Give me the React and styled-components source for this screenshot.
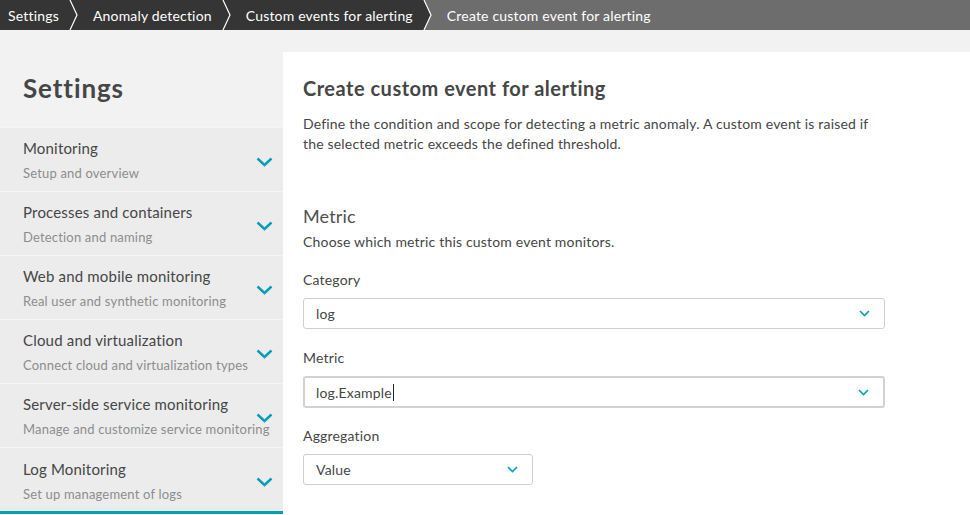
import React from "react";
import styled, { createGlobalStyle } from "styled-components";

const GlobalStyle = createGlobalStyle`
  html, body {
    margin: 0;
    padding: 0;
    background: #f2f2f2;
    font-family: Lato, "Open Sans", "Liberation Sans", sans-serif;
    color: #454646;
    letter-spacing: 0.18px;
  }
  * { box-sizing: border-box; }
`;

const TEAL = "#00a1b2";

const Page = styled.div`
  width: 970px;
  height: 515px;
  overflow: hidden;
  display: flex;
  flex-direction: column;
  background: #f2f2f2;
`;

const Breadcrumbs = styled.nav`
  height: 30px;
  display: flex;
  align-items: stretch;
  background: #353535;
  flex-shrink: 0;
`;

const Crumb = styled.div`
  display: flex;
  align-items: center;
  padding: 0 10px 0 ${(p) => (p.$first ? "8px" : "15px")};
  color: #fff;
  font-size: 14px;
  white-space: nowrap;
  background: ${(p) => (p.$current ? "#6d6d6d" : "transparent")};
  flex: ${(p) => (p.$current ? 1 : "none")};
`;

const SepSvg = styled.svg`
  display: block;
  width: 9px;
  height: 30px;
  flex-shrink: 0;
`;

function Separator({ toCurrent }) {
  return (
    <SepSvg viewBox="0 0 9 30">
      {toCurrent && <polygon points="1,0 9,0 9,30 1,30 8,15" fill="#6d6d6d" />}
      <polyline points="1,0 8,15 1,30" fill="none" stroke="#fff" strokeWidth="1.2" />
    </SepSvg>
  );
}

const Body = styled.div`
  flex: 1;
  display: flex;
  min-height: 0;
`;

const Sidebar = styled.aside`
  width: 283px;
  flex-shrink: 0;
  display: flex;
  flex-direction: column;
`;

const SideTitle = styled.h1`
  margin: 0;
  padding: 43px 23px 24px;
  font-size: 26px;
  line-height: 30px;
  font-weight: 700;
  color: #454646;
  letter-spacing: 0.9px;
`;

const NavItem = styled.div`
  height: ${(p) => (p.$active ? "67px" : "64px")};
  display: grid;
  grid-template-columns: minmax(0, 1fr) 17px;
  align-items: center;
  padding: 0 10px 0 23px;
  background: #ececec;
  border-top: 1px solid #f5f5f5;
  border-bottom: ${(p) => (p.$active ? `3px solid ${TEAL}` : "none")};
`;

const NavText = styled.div`
  display: flex;
  flex-direction: column;
  gap: 6px;
  padding-top: ${(p) => (p.$active ? "3px" : "0")};
`;

const NavTitle = styled.div`
  font-size: 15px;
  line-height: 20px;
  color: #454646;
  white-space: nowrap;
`;

const NavSub = styled.div`
  font-size: 13px;
  line-height: 18px;
  color: #8c8c8c;
  white-space: nowrap;
`;

const NavChevron = styled.svg`
  width: 17px;
  height: 10px;
  margin-top: 4px;
`;

const Main = styled.main`
  flex: 1;
  margin-top: 22px;
  background: #fff;
  padding: 24px 85px 0 20px;
`;

const Heading = styled.h2`
  margin: 0;
  font-size: 20px;
  line-height: 24px;
  font-weight: 700;
  color: #454646;
  letter-spacing: 0.5px;
`;

const Description = styled.p`
  margin: 14px 0 0;
  font-size: 14px;
  line-height: 20px;
  color: #454646;
  max-width: 586px;
`;

const SectionTitle = styled.h3`
  margin: 51px 0 0;
  font-size: 18px;
  line-height: 22px;
  font-weight: 400;
  color: #505050;
`;

const SectionSub = styled.div`
  margin-top: 6px;
  font-size: 14px;
  line-height: 18px;
  color: #454646;
`;

const Label = styled.div`
  margin-top: ${(p) => p.$mt || "20px"};
  font-size: 14px;
  line-height: 18px;
  color: #454646;
`;

const Select = styled.div`
  margin-top: 9px;
  width: ${(p) => p.$width || "582px"};
  height: ${(p) => (p.$focused ? "32px" : "31px")};
  display: flex;
  align-items: center;
  justify-content: space-between;
  padding: 0 14px 0 ${(p) => (p.$focused ? "11px" : "12px")};
  border: ${(p) => (p.$focused ? "2px solid #d2d2d2" : "1px solid #cfcfcf")};
  border-radius: 3px;
  background: #fff;
  font-size: 14px;
  color: #454646;
`;

const Value = styled.span`
  display: flex;
  align-items: center;
`;

const Caret = styled.span`
  display: inline-block;
  width: 1px;
  height: 17px;
  background: #222;
  margin-left: 1px;
`;

const SmallChevron = styled.svg`
  width: 11px;
  height: 7px;
`;

function Chevron() {
  return (
    <NavChevron viewBox="0 0 17 10">
      <polyline points="1.5,1.5 8.5,8 15.5,1.5" fill="none" stroke={TEAL} strokeWidth="2.4" />
    </NavChevron>
  );
}

function DropChevron() {
  return (
    <SmallChevron viewBox="0 0 11 7">
      <polyline points="1,1 5.5,5.5 10,1" fill="none" stroke={TEAL} strokeWidth="1.6" />
    </SmallChevron>
  );
}

const crumbs = ["Settings", "Anomaly detection", "Custom events for alerting"];

const navItems = [
  { title: "Monitoring", sub: "Setup and overview" },
  { title: "Processes and containers", sub: "Detection and naming" },
  { title: "Web and mobile monitoring", sub: "Real user and synthetic monitoring" },
  { title: "Cloud and virtualization", sub: "Connect cloud and virtualization types" },
  { title: "Server-side service monitoring", sub: "Manage and customize service monitoring" },
  { title: "Log Monitoring", sub: "Set up management of logs", active: true },
];

export default function App() {
  return (
    <Page>
      <GlobalStyle />
      <Breadcrumbs>
        {crumbs.map((c, i) => (
          <React.Fragment key={c}>
            <Crumb $first={i === 0}>{c}</Crumb>
            <Separator toCurrent={i === crumbs.length - 1} />
          </React.Fragment>
        ))}
        <Crumb $current>Create custom event for alerting</Crumb>
      </Breadcrumbs>
      <Body>
        <Sidebar>
          <SideTitle>Settings</SideTitle>
          {navItems.map((item) => (
            <NavItem key={item.title} $active={item.active}>
              <NavText $active={item.active}>
                <NavTitle>{item.title}</NavTitle>
                <NavSub>{item.sub}</NavSub>
              </NavText>
              <Chevron />
            </NavItem>
          ))}
        </Sidebar>
        <Main>
          <Heading>Create custom event for alerting</Heading>
          <Description>
            Define the condition and scope for detecting a metric anomaly. A custom event is raised if
            the selected metric exceeds the defined threshold.
          </Description>
          <SectionTitle>Metric</SectionTitle>
          <SectionSub>Choose which metric this custom event monitors.</SectionSub>
          <Label>Category</Label>
          <Select>
            <Value>log</Value>
            <DropChevron />
          </Select>
          <Label $mt="20px">Metric</Label>
          <Select $focused>
            <Value>
              log.Example
              <Caret />
            </Value>
            <DropChevron />
          </Select>
          <Label $mt="19px">Aggregation</Label>
          <Select $width="230px">
            <Value>Value</Value>
            <DropChevron />
          </Select>
        </Main>
      </Body>
    </Page>
  );
}
